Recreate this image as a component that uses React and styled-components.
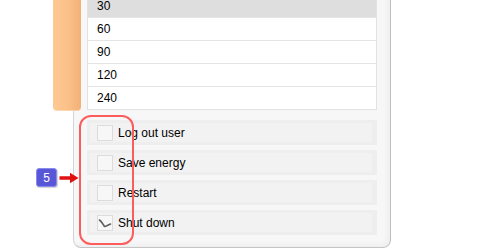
import React from "react";
import styled, { createGlobalStyle } from "styled-components";

const Global = createGlobalStyle`
  html, body { margin: 0; padding: 0; background: #ffffff; }
  body { font-family: "Liberation Sans", Arial, sans-serif; }
`;

const Stage = styled.div`
  position: relative;
  width: 480px;
  height: 250px;
  overflow: hidden;
  background: #ffffff;
`;

const Panel = styled.div`
  margin-left: 73px;
  margin-top: -5px;
  width: 318px;
  box-sizing: border-box;
  background: #f7f7f7;
  border-left: 1px solid #d4d4d4;
  border-right: 1px solid #bdbdbd;
  border-bottom: 1px solid #c4c4c4;
  border-radius: 0 0 8px 8px;
  box-shadow: inset -3px -3px 4px rgba(0, 0, 0, 0.035);
  padding: 0 13px 12px 13px;
  display: flex;
  flex-direction: column;
  gap: 10px;
`;

const List = styled.div`
  display: flex;
  flex-direction: column;
  background: #ffffff;
  border: 1px solid #e2e2e2;
  border-top: none;
`;

const ListRow = styled.div`
  height: 22px;
  display: flex;
  align-items: center;
  padding-left: 9px;
  font-size: 12px;
  line-height: 12px;
  color: #000;
  background: ${(p) => (p.$selected ? "#dedede" : "#ffffff")};
  border-bottom: 1px solid #e4e4e4;
  &:last-child { border-bottom: none; }
`;

const Options = styled.div`
  display: flex;
  flex-direction: column;
  gap: 5px;
`;

const OptionRow = styled.div`
  height: 25px;
  box-sizing: border-box;
  display: flex;
  align-items: center;
  gap: 5px;
  padding-left: 7px;
  background: #f2f2f2;
  border: 3px solid #eeeeee;
  border-right-width: 5px;
  font-size: 12px;
  color: #000;
`;

const Box = styled.span`
  width: 16px;
  height: 16px;
  box-sizing: border-box;
  border: 1px solid #dcdcdc;
  background: #f7f7f7;
  display: flex;
  align-items: center;
  justify-content: center;
`;

const OrangeTab = styled.div`
  position: absolute;
  left: 53px;
  top: 0;
  width: 28px;
  height: 111px;
  border-radius: 0 0 4px 4px;
  background: linear-gradient(to right, #fdca94 0%, #fbc088 55%, #f2b077 100%);
  box-shadow: inset 0 -1px 0 rgba(255, 255, 255, 0.35);
`;

const Highlight = styled.div`
  position: absolute;
  left: 79px;
  top: 115px;
  width: 55px;
  height: 130px;
  box-sizing: border-box;
  border: 2px solid #fd5c5c;
  border-radius: 12px;
`;

const Callout = styled.div`
  position: absolute;
  left: 36px;
  top: 168px;
  display: flex;
  align-items: center;
  gap: 2px;
`;

const Badge = styled.div`
  width: 21px;
  height: 19px;
  box-sizing: border-box;
  border: 1px solid #8a8af0;
  border-radius: 3px;
  background: #5757d8;
  color: #ffffff;
  font-size: 12px;
  display: flex;
  align-items: center;
  justify-content: center;
  box-shadow: 1px 1px 1px rgba(0, 0, 0, 0.18);
`;

const Check = () => (
  <svg width="14" height="14" viewBox="0 0 14 14">
    <path
      d="M1.5 4 C3.5 5.5 5 8 6.5 10.5 C8 10.5 10 9 12.5 8"
      fill="none"
      stroke="#606060"
      strokeWidth="1.6"
      strokeLinejoin="round"
      strokeLinecap="round"
    />
  </svg>
);

const Arrow = () => (
  <svg width="20" height="12" viewBox="0 0 20 12">
    <path d="M0.5 4.2 H11 V0.8 L19.5 6 L11 11.2 V7.8 H0.5 Z" fill="#e01010" />
  </svg>
);

const durations = ["30", "60", "90", "120", "240"];
const options = [
  { label: "Log out user", checked: false },
  { label: "Save energy", checked: false },
  { label: "Restart", checked: false },
  { label: "Shut down", checked: true },
];

export default function App() {
  return (
    <>
      <Global />
      <Stage>
        <Panel>
          <List>
            {durations.map((d, i) => (
              <ListRow key={d} $selected={i === 0}>
                {d}
              </ListRow>
            ))}
          </List>
          <Options>
            {options.map((o) => (
              <OptionRow key={o.label}>
                <Box>{o.checked && <Check />}</Box>
                <span>{o.label}</span>
              </OptionRow>
            ))}
          </Options>
        </Panel>
        <OrangeTab />
        <Highlight />
        <Callout>
          <Badge>5</Badge>
          <Arrow />
        </Callout>
      </Stage>
    </>
  );
}
